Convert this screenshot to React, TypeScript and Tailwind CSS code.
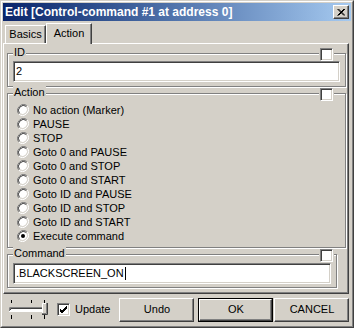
import React from "react";

const actions = [
  "No action (Marker)",
  "PAUSE",
  "STOP",
  "Goto 0 and PAUSE",
  "Goto 0 and STOP",
  "Goto 0 and START",
  "Goto ID and PAUSE",
  "Goto ID and STOP",
  "Goto ID and START",
  "Execute command",
];

function Radio({ checked }: { checked?: boolean }) {
  return (
    <svg width="12" height="12" viewBox="0 0 12 12" className="shrink-0">
      <circle cx="6" cy="6" r="5" fill="#fff" />
      <path d="M1.8 10.2 A6 6 0 0 1 10.2 1.8" stroke="#808080" strokeWidth="1" fill="none" />
      <path d="M10.2 1.8 A6 6 0 0 1 1.8 10.2" stroke="#fff" strokeWidth="1" fill="none" />
      <path d="M2.5 9.5 A5 5 0 0 1 9.5 2.5" stroke="#404040" strokeWidth="1" fill="none" />
      <path d="M9.5 2.5 A5 5 0 0 1 2.5 9.5" stroke="#d4d0c8" strokeWidth="1" fill="none" />
      {checked ? <circle cx="6" cy="6" r="2" fill="#000" /> : null}
    </svg>
  );
}

function Check({ checked }: { checked?: boolean }) {
  return (
    <div className="h-[13px] w-[13px] shrink-0 border border-t-[#808080] border-l-[#808080] border-r-white border-b-white bg-white shadow-[inset_1px_1px_0_#404040,inset_-1px_-1px_0_#d4d0c8]">
      {checked ? (
        <svg width="11" height="11" viewBox="0 0 11 11">
          <path d="M2 5 L4 7 L9 2 M2 6 L4 8 L9 3 M2 7 L4 9 L9 4" stroke="#000" strokeWidth="1" fill="none" />
        </svg>
      ) : null}
    </div>
  );
}

function Edit({ children }: { children: React.ReactNode }) {
  return (
    <div className="flex h-[21px] items-center border border-t-[#808080] border-l-[#808080] border-r-white border-b-white bg-white pl-[2px] text-[11px] text-black shadow-[inset_1px_1px_0_#404040,inset_-1px_-1px_0_#d4d0c8]">
      {children}
    </div>
  );
}

function Group({
  label,
  className,
  checkClass,
  children,
}: {
  label: string;
  className: string;
  checkClass: string;
  children: React.ReactNode;
}) {
  return (
    <div
      className={[
        "relative border border-[#808080] shadow-[inset_1px_1px_0_#fff,1px_1px_0_#fff]",
        className,
      ].join(" ")}
    >
      <span className="absolute left-[5px] top-[-8px] bg-[#d4d0c8] px-[1px] text-[11px] leading-[13px] text-black">
        {label}
      </span>
      <div className={["absolute top-[-6px] bg-[#d4d0c8] px-[1px]", checkClass].join(" ")}>
        <Check />
      </div>
      {children}
    </div>
  );
}

function Button({ label, def }: { label: string; def?: boolean }) {
  const inner = (
    <div className="flex h-full w-full items-center justify-center border border-t-white border-l-white border-r-[#404040] border-b-[#404040] bg-[#d4d0c8] text-[11px] text-black shadow-[inset_-1px_-1px_0_#808080]">
      {label}
    </div>
  );
  if (def) {
    return <div className="h-[24px] w-[75px] border border-black">{inner}</div>;
  }
  return <div className="h-[24px] w-[75px]">{inner}</div>;
}

function Slider() {
  return (
    <svg width="41" height="19" viewBox="0 0 41 19" className="shrink-0">
      <g stroke="#000" strokeWidth="1">
        <path d="M3.5 0 V3 M23.5 0 V3 M36.5 0 V3" />
        <path d="M3.5 15 V19 M23.5 15 V19 M36.5 15 V19" />
      </g>
      <rect x="1" y="7" width="36" height="4" fill="#fff" />
      <path d="M1.5 11 V7.5 H37" stroke="#808080" fill="none" />
      <path d="M2.5 10 V8.5 H36" stroke="#404040" fill="none" />
      <path d="M1 11.5 H37.5 V7" stroke="#fff" fill="none" />
      <rect x="34" y="3" width="5" height="11" fill="#d4d0c8" />
      <path d="M34.5 14 V3.5 H39" stroke="#fff" fill="none" />
      <path d="M34 13.5 H38.5 V3" stroke="#808080" fill="none" />
      <path d="M34 14.5 H39.5 V3" stroke="#404040" fill="none" />
    </svg>
  );
}

export default function App() {
  return (
    <div className="h-[328px] w-[354px] border border-t-[#d4d0c8] border-l-[#d4d0c8] border-r-[#404040] border-b-[#404040] bg-[#d4d0c8] font-['Liberation_Sans',Arial,sans-serif]">
      <div className="flex h-full w-full flex-col border border-t-white border-l-white border-r-[#808080] border-b-[#808080] p-[1px]">
        {/* title bar */}
        <div className="flex h-[18px] shrink-0 items-center justify-between bg-gradient-to-r from-[#0a246a] to-[#a6caf0] pl-[2px] pr-[2px]">
          <span className="text-[12px] font-bold leading-none text-white">
            Edit [Control-command #1 at address 0]
          </span>
          <div className="flex h-[14px] w-[16px] items-center justify-center border border-t-white border-l-white border-r-[#404040] border-b-[#404040] bg-[#d4d0c8] shadow-[inset_-1px_-1px_0_#808080]">
            <svg width="8" height="7" viewBox="0 0 8 7">
              <path d="M0.5 0 L7 6.5 M1.5 0 L8 6.5 M7 0 L0.5 6.5 M8 0 L1.5 6.5" stroke="#000" strokeWidth="1" fill="none" />
            </svg>
          </div>
        </div>

        {/* tabs */}
        <div className="mt-[1px] flex h-[21px] shrink-0 items-end">
          <div className="ml-[2px] flex h-[18px] w-[41px] items-center justify-center border-t border-l border-r border-t-white border-l-white border-r-[#404040] text-[11px] text-black shadow-[inset_-1px_0_0_#808080]">
            Basics
          </div>
          <div className="relative z-10 -mb-[1px] flex h-[21px] w-[46px] items-center justify-center border-t border-l border-r border-t-white border-l-white border-r-[#404040] bg-[#d4d0c8] pb-[1px] text-[11px] text-black shadow-[inset_-1px_0_0_#808080]">
            Action
          </div>
        </div>

        {/* tab page */}
        <div className="flex h-[251px] w-[346px] shrink-0 flex-col border border-t-white border-l-white border-r-[#404040] border-b-[#404040] px-[2px] pt-[9px] shadow-[inset_-1px_-1px_0_#808080]">
          <Group label="ID" checkClass="right-[11px]" className="ml-[1px] h-[34px] w-[339px] px-[5px] pt-[7px]">
            <Edit>2</Edit>
          </Group>

          <Group label="Action" checkClass="right-[11px]" className="ml-[1px] mt-[6px] h-[155px] w-[339px] pl-[9px] pt-[9px]">
            <div className="flex flex-col">
              {actions.map((a, i) => (
                <div key={a} className="flex h-[14px] items-center gap-[4px] text-[11px] text-black">
                  <Radio checked={i === actions.length - 1} />
                  <span>{a}</span>
                </div>
              ))}
            </div>
          </Group>

          <Group label="Command" checkClass="right-[2px]" className="ml-[1px] mt-[6px] h-[34px] w-[330px] px-[5px] pt-[8px]">
            <Edit>
              .BLACKSCREEN_ON
              <span className="ml-[1px] inline-block h-[13px] w-[1px] bg-black" />
            </Edit>
          </Group>
        </div>

        {/* footer */}
        <div className="flex flex-1 items-center pl-[5px]">
          <Slider />
          <div className="ml-[8px] flex items-center gap-[5px] text-[11px] text-black">
            <Check checked />
            <span>Update</span>
          </div>
          <div className="ml-[9px] flex items-center">
            <Button label="Undo" />
            <div className="ml-[4px]">
              <Button label="OK" def />
            </div>
            <div className="ml-[1px]">
              <Button label="CANCEL" />
            </div>
          </div>
        </div>
      </div>
    </div>
  );
}
